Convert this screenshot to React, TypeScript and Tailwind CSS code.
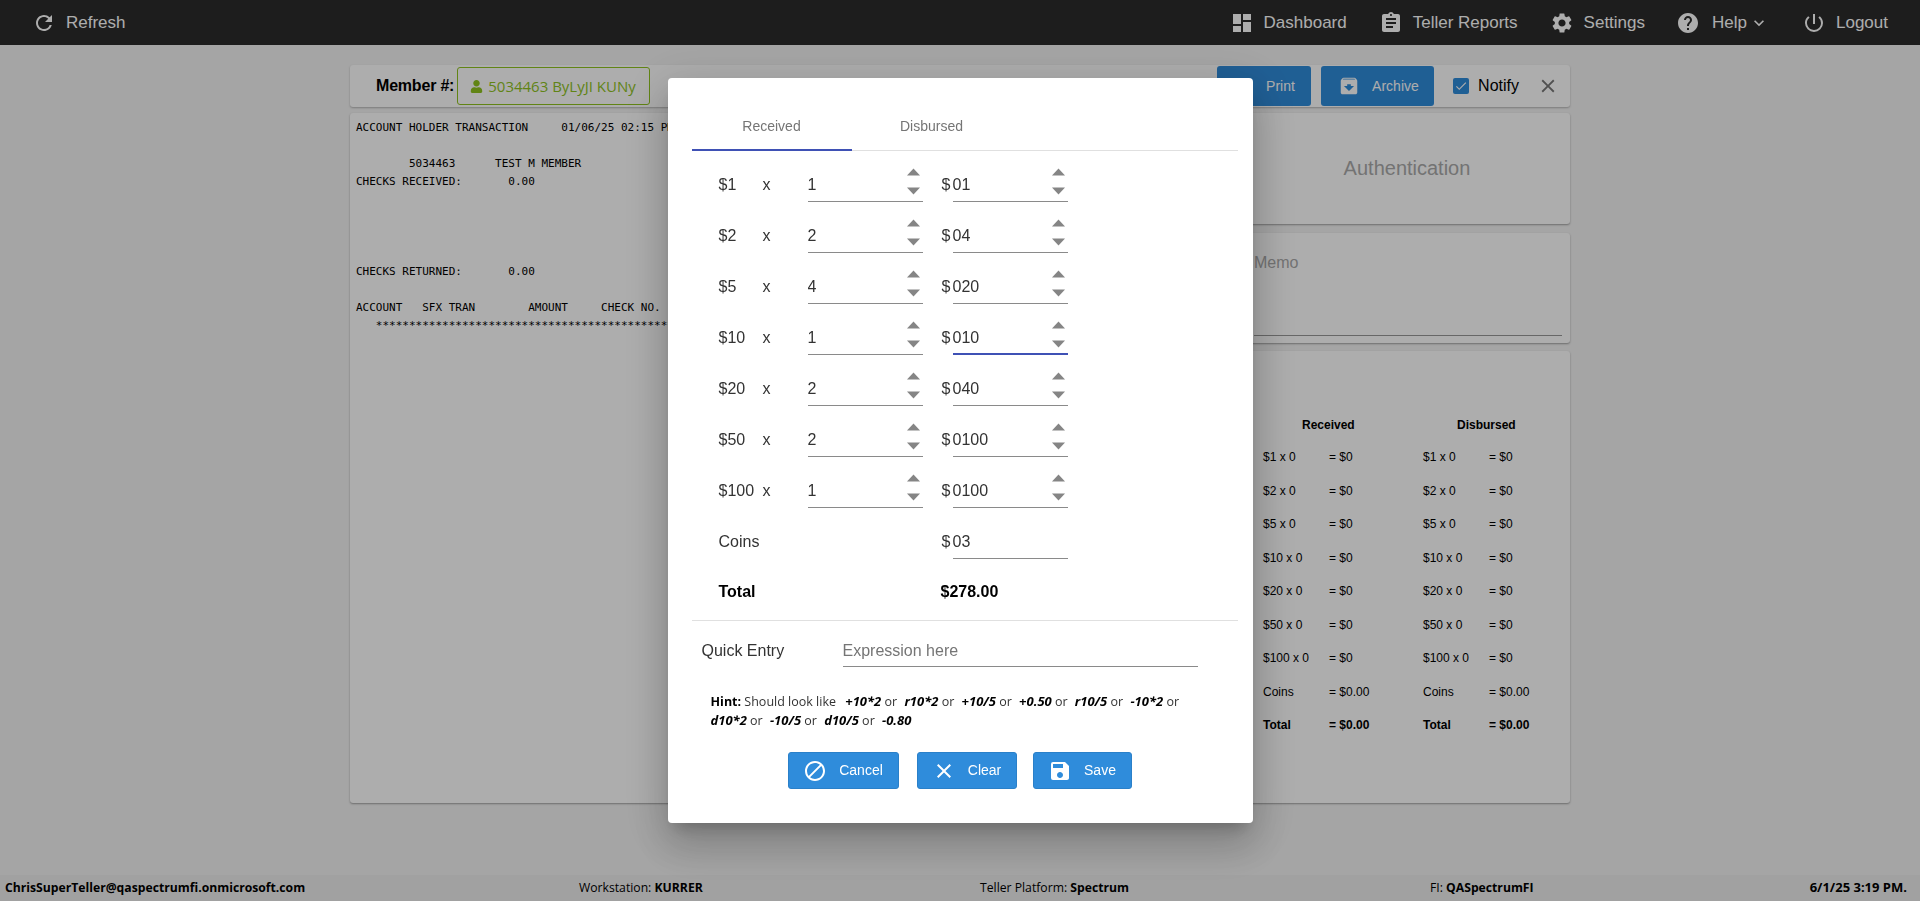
import React from 'react';
import { FaUser } from 'react-icons/fa';
import {
  MdArchive,
  MdAssignment,
  MdBlock,
  MdCheck,
  MdClose,
  MdDashboard,
  MdHelp,
  MdKeyboardArrowDown,
  MdPowerSettingsNew,
  MdPrint,
  MdRefresh,
  MdSave,
  MdSettings,
} from 'react-icons/md';

const report = `ACCOUNT HOLDER TRANSACTION     01/06/25 02:15 PM

        5034463      TEST M MEMBER
CHECKS RECEIVED:       0.00




CHECKS RETURNED:       0.00

ACCOUNT   SFX TRAN        AMOUNT     CHECK NO.
   ********************************************************************`;

const denominations = [
  { label: '$1', count: '1', amount: '01' },
  { label: '$2', count: '2', amount: '04' },
  { label: '$5', count: '4', amount: '020' },
  { label: '$10', count: '1', amount: '010', focused: true },
  { label: '$20', count: '2', amount: '040' },
  { label: '$50', count: '2', amount: '0100' },
  { label: '$100', count: '1', amount: '0100' },
];

const summary = [
  ['$1 x 0', '= $0'],
  ['$2 x 0', '= $0'],
  ['$5 x 0', '= $0'],
  ['$10 x 0', '= $0'],
  ['$20 x 0', '= $0'],
  ['$50 x 0', '= $0'],
  ['$100 x 0', '= $0'],
  ['Coins', '= $0.00'],
];

const NavItem: React.FC<{ icon: React.ReactNode; label: string; className?: string }> = ({ icon, label, className }) => (
  <div className={`flex items-center gap-[10px] text-[17px] text-white ${className ?? ''}`}>
    {icon}
    <span>{label}</span>
  </div>
);

const Spinner: React.FC = () => (
  <div className="absolute right-[3px] top-[8px] flex flex-col gap-[11px]">
    <svg width="13" height="8" viewBox="0 0 13 8" fill="#858585"><path d="M6.5 0.5 13 7.5H0z" /></svg>
    <svg width="13" height="8" viewBox="0 0 13 8" fill="#858585"><path d="M0 0.5h13L6.5 7.5z" /></svg>
  </div>
);

const NumberField: React.FC<{ value: string; focused?: boolean; spin?: boolean }> = ({ value, focused, spin = true }) => (
  <div className={`relative h-[42px] w-[115px] ${focused ? 'border-b-2 border-[#3f51b5]' : 'border-b border-[#8a8a8a]'}`}>
    <input readOnly value={value} className="h-[37px] w-full bg-transparent pt-[13px] leading-6 text-[#333] outline-none" />
    {spin && <Spinner />}
  </div>
);

const SummaryColumn: React.FC<{ title: string; titleClass: string; className: string }> = ({ title, titleClass, className }) => (
  <div className={`text-[12px] text-black ${className}`}>
    <div className={`h-[32px] font-bold ${titleClass}`}>{title}</div>
    {summary.map(([left, right]) => (
      <div key={left} className="flex h-[33.5px]">
        <span className="w-[66px]">{left}</span>
        <span>{right}</span>
      </div>
    ))}
    <div className="flex font-bold">
      <span className="w-[66px]">Total</span>
      <span>= $0.00</span>
    </div>
  </div>
);

const ModalButton: React.FC<{ icon: React.ReactNode; label: string; className: string }> = ({ icon, label, className }) => (
  <button className={`flex h-[37px] items-center justify-center gap-[12px] rounded-[3px] border border-[#2a80c9] bg-[#2f8cdb] text-[14px] text-white ${className}`}>
    {icon}
    {label}
  </button>
);

const Token: React.FC<{ children: string; className?: string }> = ({ children, className = 'ml-[4px]' }) => (
  <b className={`text-[13px] italic text-black ${className}`}>{children}</b>
);

export default function App() {
  return (
    <div className="flex h-screen flex-col overflow-hidden bg-[#f3f3f3] font-['Liberation_Sans',Arial,sans-serif]">
      <header className="flex h-[45px] shrink-0 items-center justify-between bg-[#2b2b2b] pl-[32px] pr-[32px]">
        <NavItem icon={<MdRefresh size={24} />} label="Refresh" />
        <div className="flex items-center">
          <NavItem icon={<MdDashboard size={24} />} label="Dashboard" className="mr-[32px]" />
          <NavItem icon={<MdAssignment size={24} />} label="Teller Reports" className="mr-[32px]" />
          <NavItem icon={<MdSettings size={24} />} label="Settings" className="mr-[31px]" />
          <div className="mr-[33px] flex items-center gap-[12px] text-[17px] text-white">
            <MdHelp size={24} />
            <span className="-mr-[10px]">Help</span>
            <MdKeyboardArrowDown size={20} />
          </div>
          <NavItem icon={<MdPowerSettingsNew size={24} />} label="Logout" />
        </div>
      </header>

      <main className="mx-auto w-[1220px] flex-1 pt-[20px]">
        <div className="flex h-[42px] items-center rounded-[3px] bg-white pl-[26px] pr-[11px] shadow-[0_1px_2px_rgba(0,0,0,.25)]">
          <span className="mr-[3px] text-[16px] font-bold tracking-[-0.2px] text-black">Member #:</span>
          <div className="flex h-[38px] w-[193px] items-center gap-[5px] rounded-[3px] border border-[#8fc31f] pl-[12px] font-['Open_Sans',sans-serif] text-[15px] text-[#8fc31f]">
            <FaUser size={13} />
            <span>5034463 ByLyJI KUNy</span>
          </div>
          <div className="ml-auto flex items-center">
            <button className="flex h-[40px] w-[94px] items-center gap-[15px] rounded-[3px] bg-[#2f8cdb] pl-[14px] text-[14px] text-white">
              <MdPrint size={20} />
              Print
            </button>
            <button className="ml-[10px] flex h-[40px] w-[113px] items-center gap-[12px] rounded-[3px] bg-[#2f8cdb] pl-[17px] text-[14px] text-white">
              <MdArchive size={22} />
              Archive
            </button>
            <span className="ml-[19px] flex h-[16px] w-[16px] items-center justify-center rounded-[2px] bg-[#2f8cdb] text-white">
              <MdCheck size={14} />
            </span>
            <span className="ml-[9px] text-[16px] text-black">Notify</span>
            <MdClose size={22} className="ml-[18px] text-[#777]" />
          </div>
        </div>

        <div className="mt-[6px] grid grid-cols-[886px_326px] gap-[8px]">
          <section className="h-[690px] rounded-[3px] bg-white px-[6px] py-[6px] shadow-[0_1px_2px_rgba(0,0,0,.35)]">
            <pre className="font-['DejaVu_Sans_Mono',monospace] text-[11px] leading-[18px] text-black">{report}</pre>
          </section>
          <div className="flex h-[690px] flex-col">
            <section className="flex h-[111px] items-center justify-center rounded-[3px] bg-white pb-[2px] text-[20px] text-[#aaaaaa] shadow-[0_1px_2px_rgba(0,0,0,.35)]">
              Authentication
            </section>
            <section className="mt-[9px] flex h-[110px] flex-col rounded-[3px] bg-white pb-[7px] pl-[10px] pr-[8px] pt-[18px] shadow-[0_1px_2px_rgba(0,0,0,.35)]">
              <div className="h-[85px] border-b border-[#999] text-[16px] text-[#aaaaaa]">Memo</div>
            </section>
            <section className="mt-[8px] flex h-[452px] rounded-[3px] bg-white pt-[65px] shadow-[0_1px_2px_rgba(0,0,0,.35)]">
              <SummaryColumn title="Received" titleClass="pl-[39px]" className="ml-[19px] w-[160px]" />
              <SummaryColumn title="Disbursed" titleClass="pl-[34px]" className="" />
            </section>
          </div>
        </div>
      </main>

      <footer className="grid h-[26px] shrink-0 grid-cols-[574px_401px_450px_1fr_auto] items-center bg-[#eeeeee] pl-[5px] pr-[13px] font-['Open_Sans',sans-serif] text-[12.2px] text-black">
        <span className="font-bold">ChrisSuperTeller@qaspectrumfi.onmicrosoft.com</span>
        <span>Workstation: <b>KURRER</b></span>
        <span>Teller Platform: <b>Spectrum</b></span>
        <span>FI: <b>QASpectrumFI</b></span>
        <span className="text-[13px] font-bold">6/1/25 3:19 PM.</span>
      </footer>

      <div className="fixed inset-0 flex items-center justify-center bg-black/[.32]">
        <div className="h-[745px] w-[585px] rounded-[4px] bg-white pl-[24px] pr-[15px] pt-[25px] shadow-[0_11px_15px_-7px_rgba(0,0,0,.2),0_24px_38px_3px_rgba(0,0,0,.14),0_9px_46px_8px_rgba(0,0,0,.12)]">
          <div className="flex h-[48px] border-b border-[#e0e0e0] text-[14px] text-[#757575]">
            <div className="flex h-[48px] w-[160px] items-center justify-center border-b-2 border-[#3f51b5]">Received</div>
            <div className="flex h-[47px] w-[160px] items-center justify-center">Disbursed</div>
          </div>

          <div className="pl-[27px] pt-[9px] text-[16px] text-[#333]">
            {denominations.map(row => (
              <div key={row.label} className="mb-[9px] flex h-[42px]">
                <span className="w-[44px] pt-[13px] leading-6">{row.label}</span>
                <span className="w-[45px] pt-[13px] leading-6">x</span>
                <NumberField value={row.count} />
                <span className="ml-[19px] w-[11px] pt-[13px] leading-6">$</span>
                <NumberField value={row.amount} focused={row.focused} />
              </div>
            ))}
            <div className="flex h-[42px]">
              <span className="w-[223px] pt-[13px] leading-6">Coins</span>
              <span className="w-[11px] pt-[13px] leading-6">$</span>
              <NumberField value="03" spin={false} />
            </div>
            <div className="mt-[21px] flex font-bold leading-6 text-black">
              <span className="w-[222px]">Total</span>
              <span>$278.00</span>
            </div>
          </div>

          <div className="mt-[16px] border-t border-[#e0e0e0] pl-[10px] pt-[17px]">
            <div className="flex h-[29px] items-start text-[16px] text-[#333]">
              <span className="w-[141px] pt-[1px] leading-6">Quick Entry</span>
              <input
                readOnly
                placeholder="Expression here"
                className="h-[29px] w-[355px] border-b border-[#8a8a8a] bg-transparent pb-[2px] text-[16px] leading-6 outline-none placeholder:text-[#757575]"
              />
            </div>
            <p className="ml-[9px] mt-[25px] w-[490px] font-['Open_Sans',sans-serif] text-[12.5px] leading-[18px] text-[#333]">
              <b className="text-black">Hint:</b> Should look like <Token className="ml-[6px]">+10*2</Token> or <Token>r10*2</Token> or <Token>+10/5</Token> or <Token>+0.50</Token> or <Token>r10/5</Token> or <Token>-10*2</Token> or <Token className="">d10*2</Token> or <Token>-10/5</Token> or <Token>d10/5</Token> or <Token>-0.80</Token>
            </p>
          </div>

          <div className="mt-[22px] flex pl-[96px]">
            <ModalButton icon={<MdBlock size={24} />} label="Cancel" className="w-[111px]" />
            <ModalButton icon={<MdClose size={24} />} label="Clear" className="ml-[18px] w-[100px]" />
            <ModalButton icon={<MdSave size={24} />} label="Save" className="ml-[16px] w-[99px]" />
          </div>
        </div>
      </div>
    </div>
  );
}
